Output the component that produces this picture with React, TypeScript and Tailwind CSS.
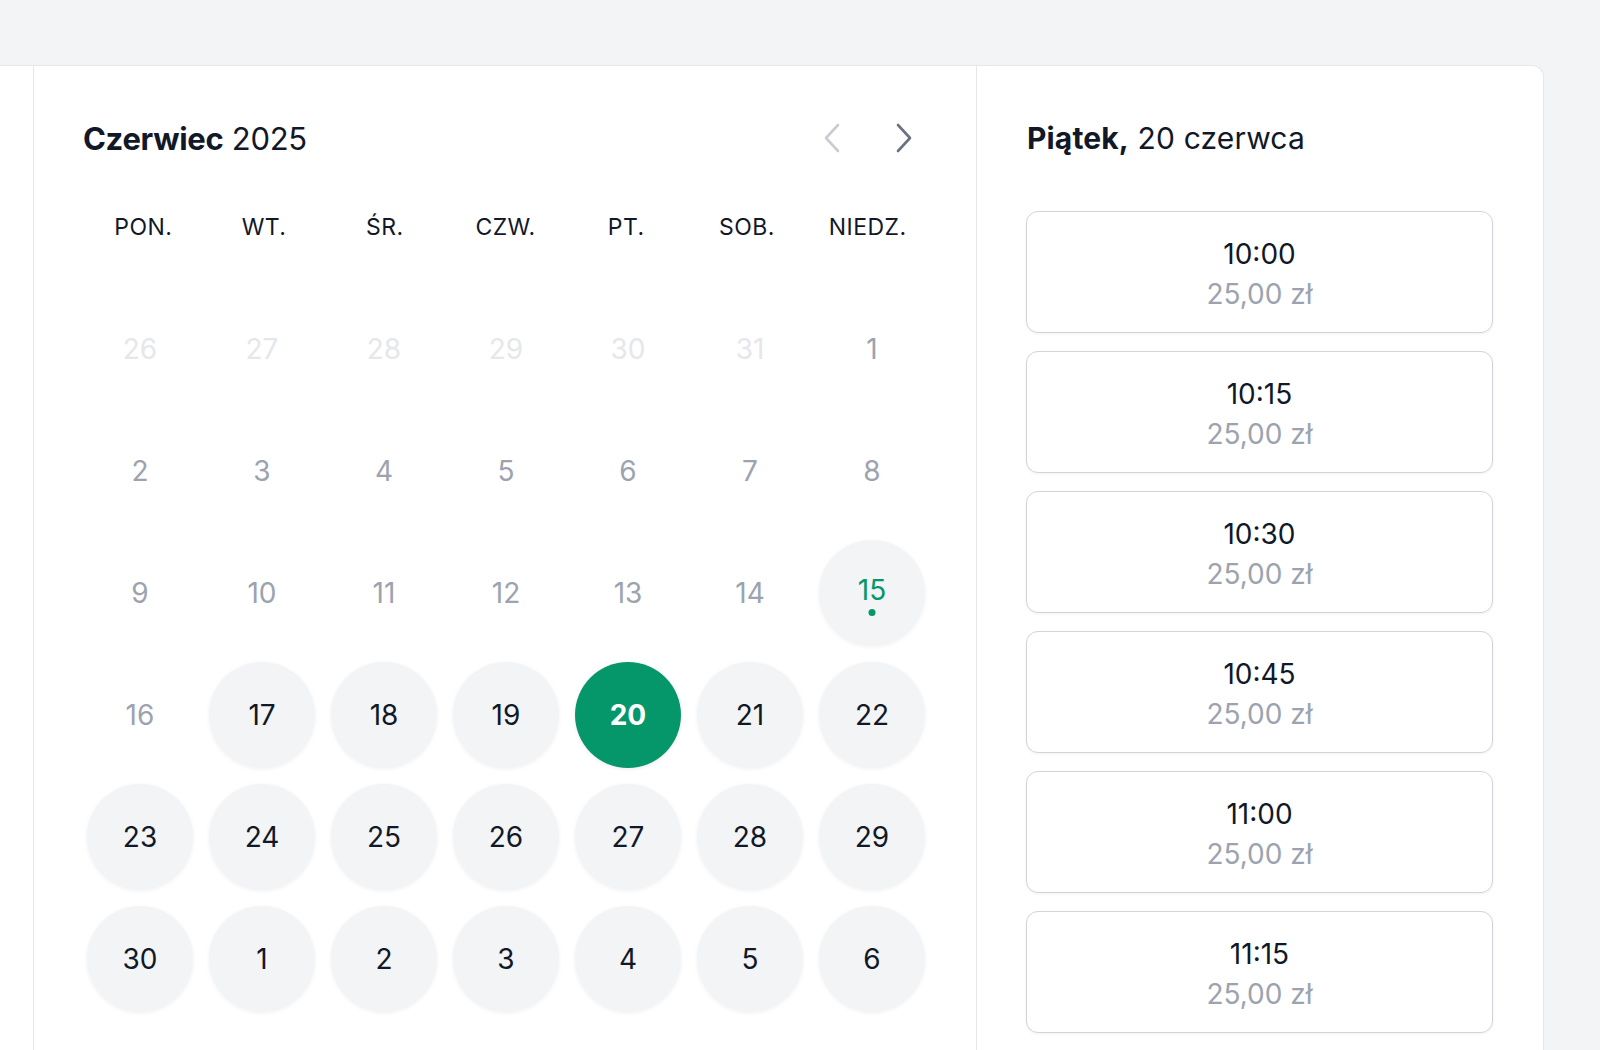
import { useState } from "react";

type DayKind = "outside" | "past" | "today" | "available";

type Day = { label: number; kind: DayKind };

const WEEKDAYS = ["PON.", "WT.", "ŚR.", "CZW.", "PT.", "SOB.", "NIEDZ."];

const SLOTS = ["10:00", "10:15", "10:30", "10:45", "11:00", "11:15", "11:30"];

function buildDays(): Day[] {
  const days: Day[] = [];
  for (let d = 26; d <= 31; d++) days.push({ label: d, kind: "outside" });
  for (let d = 1; d <= 30; d++) {
    if (d < 15) days.push({ label: d, kind: "past" });
    else if (d === 15) days.push({ label: d, kind: "today" });
    else if (d === 16) days.push({ label: d, kind: "past" });
    else days.push({ label: d, kind: "available" });
  }
  for (let d = 1; d <= 6; d++) days.push({ label: d, kind: "available" });
  return days;
}

function Chevron({ dir, className }: { dir: "left" | "right"; className?: string }) {
  return (
    <svg
      width="18"
      height="30"
      viewBox="0 0 18 30"
      fill="none"
      stroke="currentColor"
      strokeWidth="2.6"
      strokeLinecap="round"
      strokeLinejoin="round"
      className={className}
    >
      {dir === "left" ? <polyline points="15,2 3,15 15,28" /> : <polyline points="3,2 15,15 3,28" />}
    </svg>
  );
}

function DayCell({ day, selected, onSelect }: { day: Day; selected: boolean; onSelect: () => void }) {
  if (day.kind === "outside") {
    return (
      <div className="flex h-[122px] items-center justify-center text-[28px] leading-none text-[#e5e7eb]">
        {day.label}
      </div>
    );
  }
  if (day.kind === "past") {
    return (
      <div className="flex h-[122px] items-center justify-center text-[28px] leading-none text-[#9ca3af]">
        {day.label}
      </div>
    );
  }
  if (day.kind === "today") {
    return (
      <div className="flex h-[122px] items-center justify-center">
        <button
          type="button"
          onClick={onSelect}
          className="relative flex h-[106px] w-[106px] items-center justify-center rounded-full bg-[#f3f4f6] pb-[6px] text-[28px] leading-none text-[#059669] shadow-[0_1px_4px_rgba(0,0,0,0.06)]"
        >
          {day.label}
          <span className="absolute bottom-[30px] left-1/2 h-[7px] w-[7px] -translate-x-1/2 rounded-full bg-[#059669]" />
        </button>
      </div>
    );
  }
  return (
    <div className="flex h-[122px] items-center justify-center">
      <button
        type="button"
        onClick={onSelect}
        className={
          selected
            ? "flex h-[106px] w-[106px] items-center justify-center rounded-full bg-[#059669] text-[28px] font-bold leading-none text-white shadow-[0_1px_4px_rgba(0,0,0,0.08)]"
            : "flex h-[106px] w-[106px] items-center justify-center rounded-full bg-[#f3f4f6] text-[28px] leading-none text-[#111827] shadow-[0_1px_4px_rgba(0,0,0,0.06)]"
        }
      >
        {day.label}
      </button>
    </div>
  );
}

export default function App() {
  const days = buildDays();
  const [selected, setSelected] = useState(20 + 6 - 1);

  return (
    <div
      className="flex min-h-[1050px] w-full items-start overflow-hidden bg-[#f3f4f6] pt-[65px] text-[#111827]"
      style={{ fontFamily: "Inter, 'Noto Sans', sans-serif" }}
    >
      <div className="mr-[56px] flex flex-1 rounded-tr-xl border-t border-r border-[#e5e7eb] bg-white">
        <div className="w-[34px] shrink-0 border-r border-[#e5e7eb]" />

        <section className="flex-1 px-[48px] pt-[48px] pb-10">
          <div className="flex h-12 items-center justify-between">
            <h2 className="pl-[1px] text-[31px] leading-none tracking-[-0.01em]">
              <span className="font-bold">Czerwiec</span> 2025
            </h2>
            <div className="flex items-center gap-6">
              <button type="button" className="flex h-12 w-12 items-center justify-center text-[#c9ccd1]">
                <Chevron dir="left" />
              </button>
              <button type="button" className="flex h-12 w-12 items-center justify-center text-[#6b7280]">
                <Chevron dir="right" />
              </button>
            </div>
          </div>

          <div className="mt-[49px] ml-[1px] grid h-8 grid-cols-7 items-center">
            {WEEKDAYS.map((w) => (
              <div key={w} className="text-center text-[23px] leading-none tracking-[0.02em] text-[#111827]">
                {w}
              </div>
            ))}
          </div>

          <div className="mt-[45px] -mr-[5px] -ml-[3px] grid grid-cols-7">
            {days.map((day, i) => (
              <DayCell key={i} day={day} selected={i === selected} onSelect={() => setSelected(i)} />
            ))}
          </div>
        </section>

        <aside className="w-[567px] shrink-0 border-l border-[#e5e7eb] pt-[48px] pr-[50px] pl-[50px]">
          <div className="flex h-12 items-center">
            <h3 className="text-[30px] leading-none tracking-[0.005em]">
              <span className="font-bold">Piątek,</span> 20 czerwca
            </h3>
          </div>
          <div className="mt-[49px] -ml-[1px] flex flex-col gap-[18px]">
            {SLOTS.map((t) => (
              <button
                key={t}
                type="button"
                className="flex flex-col items-center rounded-xl border border-[#d1d5db] bg-white pt-[22px] pb-[18px] shadow-[0_1px_3px_rgba(0,0,0,0.06)]"
              >
                <span className="text-[28px] leading-[40px] text-[#111827]">{t}</span>
                <span className="text-[28px] leading-[40px] text-[#9ca3af]">25,00 zł</span>
              </button>
            ))}
          </div>
        </aside>
      </div>
    </div>
  );
}
